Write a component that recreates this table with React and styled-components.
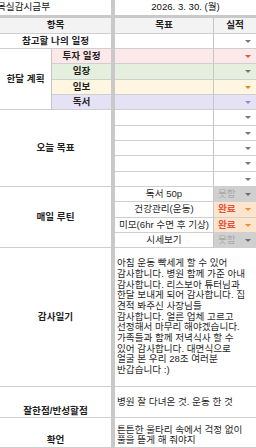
import React from 'react';
import styled, { createGlobalStyle } from 'styled-components';

const Global = createGlobalStyle`
  html, body { margin: 0; padding: 0; background: #fff; overflow: hidden; }
  body { font-family: "Liberation Sans", "Noto Sans CJK KR", sans-serif; color: #1f1f1f; }
`;

const ROWS = [15, 3, 16, 15, 15, 16, 15, 15, 16, 15, 15, 16, 15, 15, 16, 15, 15, 139, 31, 30];

const Sheet = styled.div`
  display: grid;
  width: 256px;
  height: 448px;
  overflow: hidden;
  grid-template-columns: 52px 59px 4px 99px 42px;
  grid-template-rows: ${ROWS.map((r) => `${r}px`).join(' ')};
  font-size: 9.6px;
  line-height: 10.7px;
`;

const FreezeBar = styled.div`
  background: #c9c9c9;
  grid-row: ${(p) => (p.$vertical ? '1 / -1' : '2')};
  grid-column: ${(p) => (p.$vertical ? '3' : '1 / -1')};
  z-index: 1;
`;

const Cell = styled.div`
  box-sizing: border-box;
  min-width: 0;
  overflow: hidden;
  white-space: nowrap;
  display: flex;
  align-items: ${(p) => p.$valign || 'center'};
  justify-content: ${(p) => p.$halign || 'center'};
  grid-row: ${(p) => p.$row} / span ${(p) => p.$rows || 1};
  grid-column: ${(p) => p.$col} / span ${(p) => p.$cols || 1};
  background: ${(p) => p.$bg || '#fff'};
  border-bottom: ${(p) => (p.$noLine ? 'none' : '1px solid #cfcfcf')};
  border-right: ${(p) => (p.$divider ? '1px solid #c6c6c6' : 'none')};
  padding-bottom: ${(p) => p.$padBottom || 0}px;
`;

const TitleCell = styled(Cell)`
  justify-content: ${(p) => (p.$left ? 'flex-start' : 'center')};
  text-indent: ${(p) => (p.$left ? '-3px' : '0')};
  color: #111;
`;

const HeaderCell = styled(Cell)`
  background: #f3f3f3;
  font-weight: 700;
`;

const Label = styled(Cell)`
  font-weight: 700;
`;

const GoalCell = styled(Cell)`
  padding: 0 2px;
`;

const ResultCell = styled(Cell)`
  justify-content: space-between;
  padding: 0 5px 0 4px;
`;

const Status = styled.span`
  font-weight: ${(p) => (p.$done ? 700 : 400)};
  color: ${(p) => (p.$done ? '#e8503a' : '#a8a8a8')};
`;

const Arrow = styled.span`
  width: 0;
  height: 0;
  margin-left: auto;
  border-left: 3px solid transparent;
  border-right: 3px solid transparent;
  border-top: 3px solid ${(p) => p.$color || '#767676'};
`;

const NoteCell = styled(Cell)`
  flex-direction: column;
  align-items: flex-start;
  justify-content: ${(p) => p.$justify || 'center'};
  padding-left: 2px;
  padding-right: 1px;
`;

const NoteLine = styled.div`
  white-space: nowrap;
`;

const monthly = [
  { label: '투자 일정', bg: '#fce8e8', arrow: '#e5533d' },
  { label: '임장', bg: '#e5efde', arrow: '#6f7f63' },
  { label: '임보', bg: '#fff6e1', arrow: '#e0891f' },
  { label: '독서', bg: '#e6e2f5', arrow: '#8f89cf' },
];

const routines = [
  { goal: '독서 50p', done: false },
  { goal: '건강관리(운동)', done: true },
  { goal: '미모(6hr 수면 후 기상)', done: true },
  { goal: '시세보기', done: false },
];

const gratitude = [
  '아침 운동 빡세게 할 수 있어',
  '감사합니다. 병원 함께 가준 아내',
  '감사합니다. 리스보아 튜터님과',
  '한달 보내게 되어 감사합니다. 집',
  '견적 봐주신 사장님들',
  '감사합니다. 얼른 업체 고르고',
  '선정해서 마무리 해야겠습니다.',
  '가족들과 함께 저녁식사 할 수',
  '있어 감사합니다. 대면식으로',
  '얼굴 본 우리 28조 여러분',
  '반갑습니다 :)',
];

function Result({ row, bg, arrow, status }) {
  const statusBg = status === undefined ? bg : status ? '#fde4cc' : '#d0d0d0';
  const arrowColor = status === undefined ? arrow : status ? '#e69138' : '#6b6b6b';
  return (
    <ResultCell $row={row} $col={5} $bg={statusBg}>
      {status !== undefined && <Status $done={status}>{status ? '완료' : '못함'}</Status>}
      <Arrow $color={arrowColor} />
    </ResultCell>
  );
}

export default function App() {
  return (
    <>
      <Global />
      <Sheet>
        <TitleCell $row={1} $col={1} $cols={2} $left $noLine>목실감시금부</TitleCell>
        <TitleCell $row={1} $col={4} $cols={2} $noLine>2026. 3. 30. (월)</TitleCell>

        <FreezeBar />
        <FreezeBar $vertical />

        <HeaderCell $row={3} $col={1} $cols={2}>항목</HeaderCell>
        <HeaderCell $row={3} $col={4} $divider>목표</HeaderCell>
        <HeaderCell $row={3} $col={5}>실적</HeaderCell>

        <Label $row={4} $col={1} $cols={2}>참고할 나의 일정</Label>
        <GoalCell $row={4} $col={4} $divider />
        <Result row={4} />

        <Label $row={5} $col={1} $rows={4} $divider>한달 계획</Label>
        {monthly.map((m, i) => (
          <React.Fragment key={m.label}>
            <Label $row={5 + i} $col={2} $bg={m.bg}>{m.label}</Label>
            <GoalCell $row={5 + i} $col={4} $bg={m.bg} $divider />
            <Result row={5 + i} bg={m.bg} arrow={m.arrow} />
          </React.Fragment>
        ))}

        <Label $row={9} $col={1} $cols={2} $rows={5}>오늘 목표</Label>
        {[0, 1, 2, 3, 4].map((i) => (
          <React.Fragment key={i}>
            <GoalCell $row={9 + i} $col={4} $divider />
            <Result row={9 + i} />
          </React.Fragment>
        ))}

        <Label $row={14} $col={1} $cols={2} $rows={4}>매일 루틴</Label>
        {routines.map((r, i) => (
          <React.Fragment key={r.goal}>
            <GoalCell $row={14 + i} $col={4} $divider>{r.goal}</GoalCell>
            <Result row={14 + i} status={r.done} />
          </React.Fragment>
        ))}

        <Label $row={18} $col={1} $cols={2}>감사일기</Label>
        <NoteCell $row={18} $col={4} $cols={2}>
          {gratitude.map((line) => (
            <NoteLine key={line}>{line}</NoteLine>
          ))}
        </NoteCell>

        <Label $row={19} $col={1} $cols={2} $valign="flex-end">잘한점/반성할점</Label>
        <NoteCell $row={19} $col={4} $cols={2}>
          <NoteLine>병원 잘 다녀온 것. 운동 한 것</NoteLine>
        </NoteCell>

        <Label $row={20} $col={1} $cols={2} $valign="flex-end" $padBottom={1}>확언</Label>
        <NoteCell $row={20} $col={4} $cols={2} $justify="flex-end" $padBottom={1}>
          <NoteLine>튼튼한 울타리 속에서 걱정 없이</NoteLine>
          <NoteLine>풀을 뜯게 해 줘야지</NoteLine>
        </NoteCell>
      </Sheet>
    </>
  );
}
